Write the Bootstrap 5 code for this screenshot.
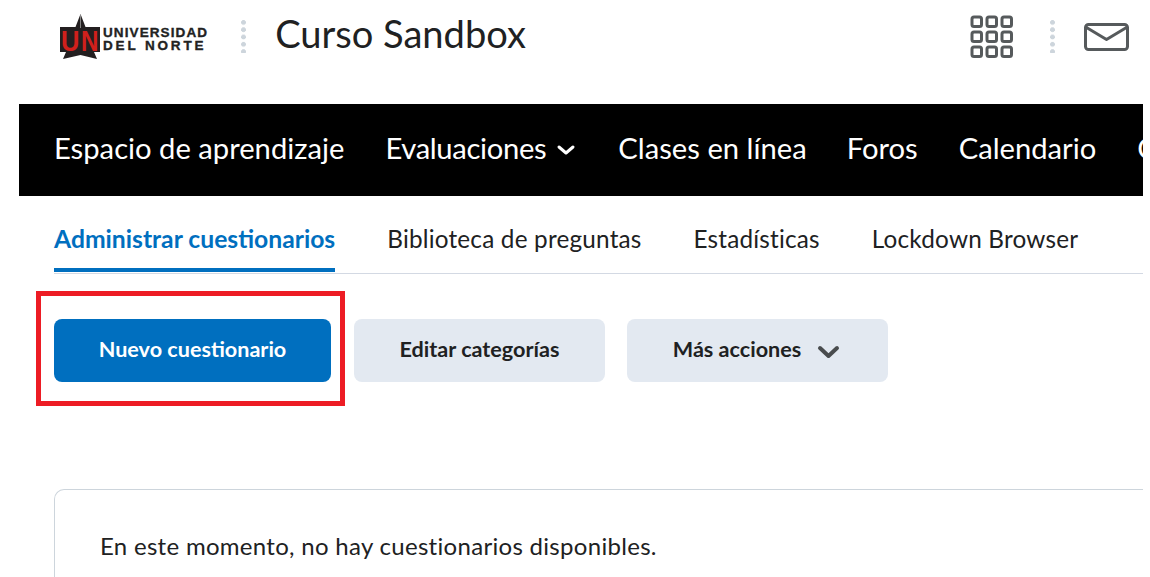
<!DOCTYPE html>
<html lang="es">
<head>
<meta charset="utf-8">
<title>Curso Sandbox</title>
<link href="https://cdn.jsdelivr.net/npm/bootstrap@5.3.0/dist/css/bootstrap.min.css" rel="stylesheet">
<style>
html,body{height:577px;overflow:hidden;background:#fff}
body{font-family:Lato,"Liberation Sans",sans-serif;color:#202122}
.pagewrap{width:1143px;overflow:hidden;position:relative;height:577px}
.tophead{height:104px;padding:0 0 31px 60px}
.logotext{font-family:"Liberation Sans",sans-serif;font-weight:700;color:#222;line-height:13px;margin-left:3px;margin-top:5px;-webkit-text-stroke:.35px #222;white-space:nowrap}
.logotext div:first-child{font-size:13.5px;letter-spacing:1.1px}
.logotext div:last-child{font-size:13.5px;letter-spacing:2.85px}
.logomark{width:40px;height:46px;display:block;overflow:visible}
.dotsep{width:5px;height:33px;background:radial-gradient(circle at 2.5px 2.5px,#cdd5dc 2.2px,transparent 2.6px) 0 0/5px 7.3px repeat-y}
.sepleft{margin:0 29px 0 33px}
.sepright{margin:0 29px 0 37px}
.coursetitle{font-size:38.1px;line-height:1;font-weight:400;margin:0 0 7px;color:#202122}
.iconzone{margin-left:auto;padding-right:14px}
.mainbar{background:#000;height:92px;margin-left:19px;padding:0 0 4px 35px;white-space:nowrap;gap:41px;overflow:hidden;flex-wrap:nowrap}
.mainbar .nav-link{color:#fff;font-size:29.2px;padding:0;flex:none}
.mainbar .evalitem{letter-spacing:-.33px}
.mainbar .forositem{margin-left:-1px}
.subtabs{margin-left:54px;height:78px;border-bottom:1px solid #d3d9e3;gap:52px;align-items:flex-end;flex-wrap:nowrap}
.subtabs .nav-link{color:#202122;font-size:24.3px;padding:0 0 16px;height:48px;line-height:28px;letter-spacing:.2px}
.subtabs .nav-link.active{color:#006fbf;font-size:24.7px;font-weight:700;border-bottom:4px solid #006fbf;margin-bottom:1px;height:47px;padding-bottom:0;letter-spacing:0}
.actionrow{margin:45px 0 0 54px;gap:23px}
.actbtn{height:63px;border:0;border-radius:8px;font-size:21.6px;font-weight:700;padding:0 0 2px;color:#202122;background:#e3e9f1;line-height:1}
.actbtn.btn:hover{background:#e3e9f1}
.actbtn.primarybtn{width:277px;background:#006fbf;color:#fff}
.actbtn.primarybtn:hover{background:#006fbf;color:#fff}
.actbtn.catbtn{width:251px;margin-right:-1px}
.actbtn.morebtn{width:261px;gap:16px;padding-right:2px}
.emptybox{margin:107px 0 0 54px;height:140px;border:1px solid #cdd5dc;border-right:0;border-radius:10px 0 0 0;padding:41px 45px;font-size:24px;line-height:30px;letter-spacing:.3px}
.callout{position:absolute;left:36px;top:291px;width:309px;height:115px;border:5px solid #ed1c24;pointer-events:none}
</style>
</head>
<body>
<div class="pagewrap">
  <header class="tophead d-flex align-items-center">
    <div class="d-flex align-items-center">
      <svg class="logomark" viewBox="0 0 40 46" aria-hidden="true">
        <polygon points="20.500,0 25.500,13 40,13 40,38 34,38 37,45 20.500,41 3,45 6,38 0,38 0,13 15.500,13" fill="#231f20"/>
        <path d="M20.500 1V14" stroke="#9a9a9a" stroke-width=".8"/>
        <text x="1" y="37" font-family="Liberation Sans" font-weight="700" font-size="29" fill="#d0201c" textLength="18.500" lengthAdjust="spacingAndGlyphs">U</text>
        <text x="21" y="37" font-family="Liberation Sans" font-weight="700" font-size="29" fill="#d0201c" textLength="17.500" lengthAdjust="spacingAndGlyphs">N</text>
      </svg>
      <div class="logotext"><div>UNIVERSIDAD</div><div>DEL NORTE</div></div>
    </div>
    <div class="dotsep sepleft"></div>
    <h1 class="coursetitle">Curso Sandbox</h1>
    <div class="iconzone d-flex align-items-center">
      <svg width="43" height="43" viewBox="0 0 43 43" fill="none" stroke="#565a5c" stroke-width="3" aria-hidden="true">
        <rect x="2" y="2" width="9.5" height="9.5" rx="2"/><rect x="17" y="2" width="9.5" height="9.5" rx="2"/><rect x="32" y="2" width="9.5" height="9.5" rx="2"/>
        <rect x="2" y="17" width="9.5" height="9.5" rx="2"/><rect x="17" y="17" width="9.5" height="9.5" rx="2"/><rect x="32" y="17" width="9.5" height="9.5" rx="2"/>
        <rect x="2" y="32" width="9.5" height="9.5" rx="2"/><rect x="17" y="32" width="9.5" height="9.5" rx="2"/><rect x="32" y="32" width="9.5" height="9.5" rx="2"/>
      </svg>
      <div class="dotsep sepright"></div>
      <svg width="45" height="28" viewBox="0 0 45 28" fill="none" stroke="#565a5c" stroke-width="3" stroke-linejoin="round" stroke-linecap="round" aria-hidden="true">
        <rect x="1.5" y="1.5" width="42" height="25" rx="3"/><path d="M2.5 4.5 22.5 16.5 42.5 4.5"/>
      </svg>
    </div>
  </header>

  <nav class="nav mainbar align-items-center">
    <a class="nav-link" href="#">Espacio de aprendizaje</a>
    <a class="nav-link evalitem d-flex align-items-center" href="#">Evaluaciones
      <svg class="ms-2 mt-1" width="23" height="12" viewBox="0 0 23 12" fill="none" stroke="#fff" stroke-width="3" stroke-linecap="round" stroke-linejoin="round" aria-hidden="true"><path d="M5 3 12 9 19 3"/></svg>
    </a>
    <a class="nav-link" href="#">Clases en línea</a>
    <a class="nav-link forositem" href="#">Foros</a>
    <a class="nav-link" href="#">Calendario</a>
    <a class="nav-link" href="#">Contenido</a>
  </nav>

  <nav class="nav subtabs">
    <a class="nav-link active" href="#">Administrar cuestionarios</a>
    <a class="nav-link" href="#">Biblioteca de preguntas</a>
    <a class="nav-link" href="#">Estadísticas</a>
    <a class="nav-link" href="#">Lockdown Browser</a>
  </nav>

  <div class="actionrow d-flex">
    <button type="button" class="btn actbtn primarybtn">Nuevo cuestionario</button>
    <button type="button" class="btn actbtn catbtn">Editar categorías</button>
    <button type="button" class="btn actbtn morebtn d-flex align-items-center justify-content-center">Más acciones
      <svg class="mt-1" width="23" height="14" viewBox="0 0 23 14" fill="none" stroke="#494c4e" stroke-width="4" stroke-linecap="round" stroke-linejoin="round" aria-hidden="true"><path d="M3 3 11.500 11 20 3"/></svg>
    </button>
  </div>

  <div class="emptybox">En este momento, no hay cuestionarios disponibles.</div>
  <div class="callout"></div>
</div>
<script src="https://cdn.jsdelivr.net/npm/bootstrap@5.3.0/dist/js/bootstrap.bundle.min.js"></script>
</body>
</html>
